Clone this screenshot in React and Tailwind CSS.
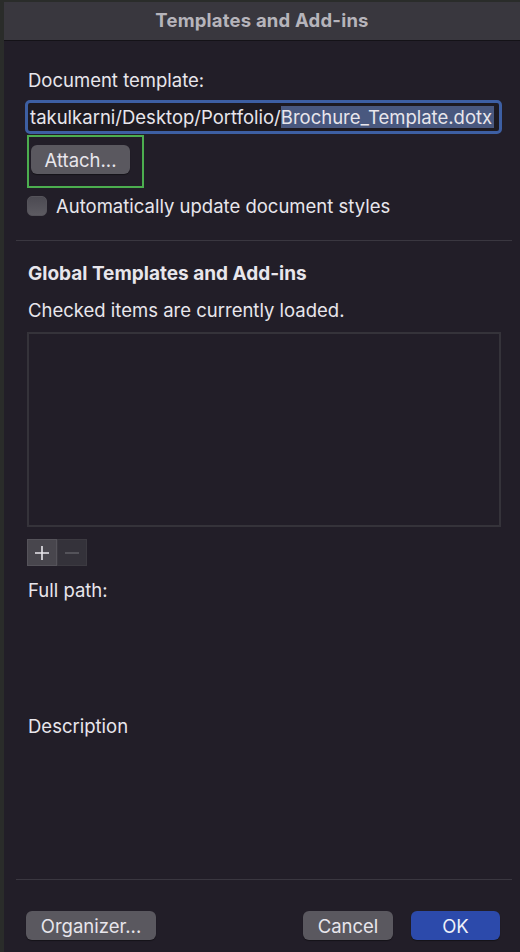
import React from 'react';

const font = { fontFamily: 'Inter, "Noto Sans", sans-serif' };

const Separator = () => <div className="h-px bg-[#3a3740]" />;

const GrayButton = ({ children, className = '' }) => (
  <button
    className={`h-[29px] rounded-[6px] bg-[#5a585f] text-[18.5px] leading-[24px] text-[#e8e6ec] shadow-[0_1px_1px_rgba(0,0,0,0.4)] ${className}`}
  >
    {children}
  </button>
);

const App = () => {
  return (
    <div
      className="w-[520px] h-[952px] bg-[#2a2c2a] pt-[2px] pl-[4px] flex flex-col overflow-hidden"
      style={font}
    >
      <div className="flex-1 flex flex-col bg-[#221e28] text-[#e8e6ec]">
        {/* title bar */}
        <div className="h-[39px] shrink-0 bg-[#39373e] border-b border-[#141217] flex items-center justify-center">
          <span className="text-[18.5px] font-bold text-[#b6b4bb] tracking-[0.2px]">Templates and Add-ins</span>
        </div>

        <div className="flex flex-col pl-[12px] pr-[8px]">
          <div className="px-[12px]">
            <div className="mt-[28px] text-[18.5px] leading-[22px]">Document template:</div>

            <div className="mt-[9px] -ml-[3px] -mr-[2px] h-[34px] rounded-[5px] border-[3px] border-[#3d5fa3] bg-[#1d1a21] flex items-center overflow-hidden">
              <span className="pl-[2px] text-[18.5px] leading-[24px] whitespace-nowrap">
                takulkarni/Desktop/Portfolio/
                <span className="bg-[#49587f] pr-[2px]">Brochure_Template.dotx</span>
              </span>
            </div>

            <div className="mt-px -ml-px w-[117px] h-[53px] border-2 border-[#4cae4f] pl-[2px] pt-[8px]">
              <GrayButton className="w-[99px]">Attach...</GrayButton>
            </div>

            <label className="mt-[8px] flex items-center gap-[9px] h-[20px]">
              <span className="-ml-px w-[20px] h-[20px] rounded-[5px] bg-gradient-to-b from-[#4c4a52] to-[#5d5b62] border border-[#55535a]" />
              <span className="text-[18.5px] leading-[22px]">Automatically update document styles</span>
            </label>
          </div>

          <div className="mt-[24px]">
            <Separator />
          </div>

          <div className="px-[12px]">
            <div className="mt-[22px] text-[19px] leading-[22px] font-bold">Global Templates and Add-ins</div>
            <div className="mt-[14px] text-[18.5px] leading-[22px]">Checked items are currently loaded.</div>

            <div className="mt-[11px] -ml-px mr-[-1px] h-[195px] border-2 border-[#35333a] bg-[#221e28]" />

            <div className="mt-[12px] -ml-px flex h-[27px]">
              <div className="w-[30px] h-[27px] bg-[#48464d] border border-[#55535a] flex items-center justify-center">
                <svg width="18" height="18" viewBox="0 0 18 18">
                  <path d="M9 2v14M2 9h14" stroke="#e8e6ec" strokeWidth="1.6" />
                </svg>
              </div>
              <div className="w-[30px] h-[27px] bg-[#34323a] border border-[#3c3a41] flex items-center justify-center">
                <svg width="18" height="18" viewBox="0 0 18 18">
                  <path d="M2 9h14" stroke="#5e5c63" strokeWidth="1.6" />
                </svg>
              </div>
            </div>

            <div className="mt-[13px] text-[18.5px] leading-[22px]">Full path:</div>
            <div className="mt-[114px] text-[18.5px] leading-[22px]">Description</div>
          </div>

          <div className="mt-[142px]">
            <Separator />
          </div>

          <div className="px-[12px] mt-[31px] flex items-center -ml-px">
            <GrayButton className="w-[130px] -ml-px">Organizer...</GrayButton>
            <div className="flex-1" />
            <GrayButton className="w-[90px]">Cancel</GrayButton>
            <button className="ml-[18px] w-[89px] h-[29px] rounded-[6px] bg-[#2c4aab] text-[18.5px] leading-[24px] text-[#eef0f8] shadow-[0_1px_1px_rgba(0,0,0,0.4)]">
              OK
            </button>
          </div>
        </div>
      </div>
    </div>
  );
};

export default App;
